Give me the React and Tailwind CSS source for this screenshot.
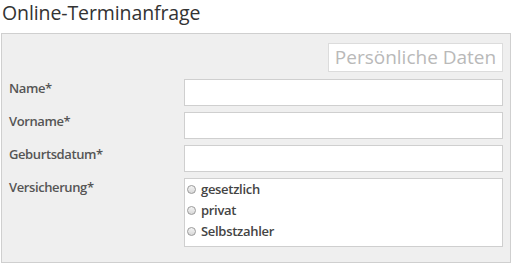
import React from 'react';

const fields = ['Name*', 'Vorname*', 'Geburtsdatum*'];
const options = ['gesetzlich', 'privat', 'Selbstzahler'];

function Radio() {
  return (
    <span className="inline-block w-[9px] h-[9px] rounded-full border border-[#9a9a9a] bg-gradient-to-b from-[#f4f4f4] to-[#d8d8d8] shrink-0" />
  );
}

export default function App() {
  return (
    <div className="w-[513px] h-[263px] bg-white overflow-hidden font-['Open_Sans',sans-serif]">
      {/* Titel */}
      <h1 className="h-[33px] pl-[2px] pt-[1px] text-[19.5px] leading-[24px] tracking-[-0.1px] text-[#333] font-normal">
        Online-Terminanfrage
      </h1>

      {/* Formular */}
      <div className="ml-[1px] w-[510px] h-[230px] border border-[#cfcfcf] bg-[#efefef] pt-[9px] pr-[7px] pl-[7px]">
        <div className="flex justify-end">
          <div className="w-[175px] h-[29px] border border-[#dcdcdc] bg-white flex items-center justify-center text-[19px] text-[#b9b9b9]">
            Persönliche Daten
          </div>
        </div>

        <div className="mt-[7px] flex flex-col gap-[6px]">
          {fields.map((f) => (
            <div key={f} className="flex">
              <label className="w-[175px] pt-[1px] text-[13px] leading-[16px] tracking-[-0.4px] font-semibold text-[#555]">{f}</label>
              <input className="w-[319px] h-[27px] border border-[#cfcfcf] bg-white outline-none" />
            </div>
          ))}
          <div className="flex">
            <label className="w-[175px] pt-[1px] text-[13px] leading-[16px] tracking-[-0.4px] font-semibold text-[#555]">Versicherung*</label>
            <div className="w-[319px] h-[69px] border border-[#cfcfcf] bg-white pl-[2px]">
              {options.map((o) => (
                <div key={o} className="h-[21px] flex items-center gap-[5px] text-[13px] tracking-[-0.3px] font-semibold text-[#444]">
                  <Radio />
                  <span>{o}</span>
                </div>
              ))}
            </div>
          </div>
        </div>
      </div>
    </div>
  );
}
